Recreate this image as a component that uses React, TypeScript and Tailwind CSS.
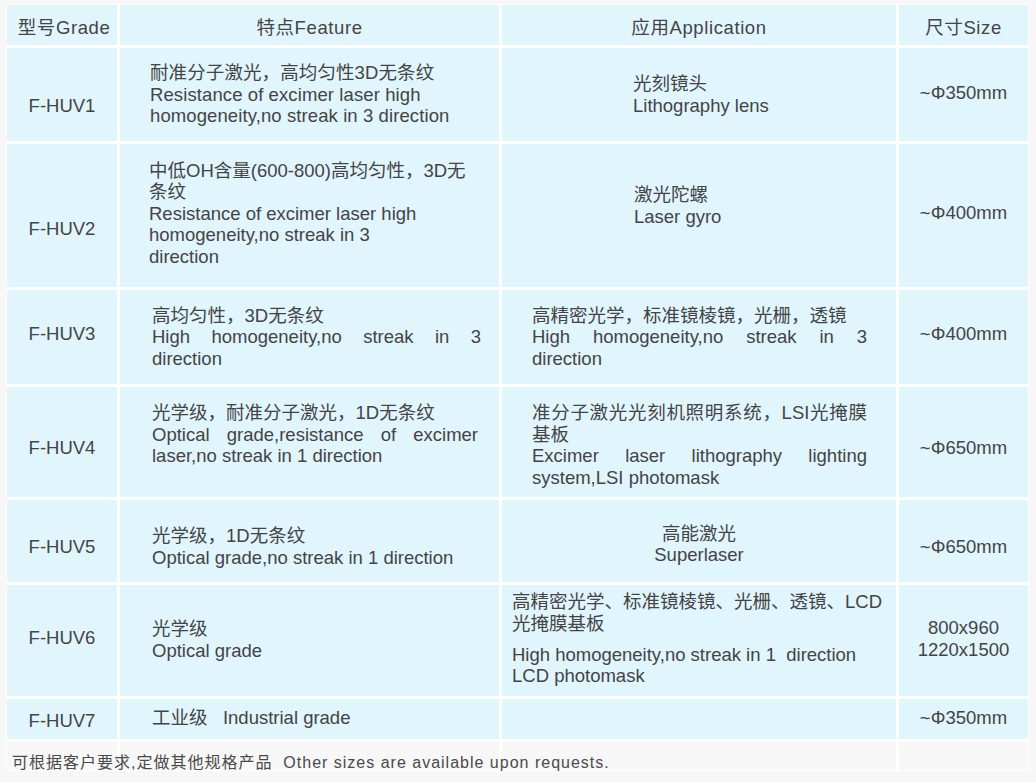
import clsx from 'clsx'

type LineProps = { text: string; justify?: boolean; className?: string }

// one rendered line of a cell
const Line = ({ text, justify, className }: LineProps) => (
  <div
    className={clsx(
      'text-[18.5px] leading-[21.5px]',
      justify ? 'text-justify [text-align-last:justify]' : 'whitespace-pre',
      className
    )}
  >
    {text}
  </div>
)

const Cell = ({ className, children }: { className?: string; children?: React.ReactNode }) => (
  <div className={clsx('flex flex-col justify-center bg-[#e1f5fd]', className)}>{children}</div>
)

const Grade = ({ text, className }: { text: string; className?: string }) => (
  <Cell className={clsx('items-center', className)}>
    <Line text={text} />
  </Cell>
)

const Size = ({ lines, className }: { lines: string[]; className?: string }) => (
  <Cell className={clsx('items-center', className)}>
    {lines.map((l) => (
      <Line key={l} text={l} />
    ))}
  </Cell>
)

export default function App() {
  return (
    <div className="min-h-screen bg-[#f7f7f7] pl-[6px] pt-[4px] font-['Liberation_Sans','Noto_Sans_CJK_SC',sans-serif] text-[#444]">
      <div className="inline-block bg-white p-px">
        <div className="grid grid-cols-[110px_379px_394px_129px] grid-rows-[40px_93px_143px_94px_110px_82px_111px_40px_28px] gap-[3px]">
          {/* header */}
          <Cell className="items-center pt-[6px] pl-[4px] tracking-[0.6px]">
            <Line text="型号Grade" />
          </Cell>
          <Cell className="items-center pt-[6px] tracking-[0.6px]">
            <Line text="特点Feature" />
          </Cell>
          <Cell className="items-center pt-[6px] tracking-[0.6px]">
            <Line text="应用Application" />
          </Cell>
          <Cell className="items-center pt-[6px] tracking-[0.6px]">
            <Line text="尺寸Size" />
          </Cell>

          {/* F-HUV1 */}
          <Grade text="F-HUV1" className="pt-[22px]" />
          <Cell className="pl-[30px] tracking-[0.1px]">
            <Line text="耐准分子激光，高均匀性3D无条纹" />
            <Line text="Resistance of excimer laser high" />
            <Line text="homogeneity,no streak in 3 direction" />
          </Cell>
          <Cell className="pl-[131px]">
            <Line text="光刻镜头" />
            <Line text="Lithography lens" />
          </Cell>
          <Size lines={['~Φ350mm']} className="pb-[3px]" />

          {/* F-HUV2 */}
          <Grade text="F-HUV2" className="pt-[27px]" />
          <Cell className="pl-[29px] pb-[4px]">
            <Line text="中低OH含量(600-800)高均匀性，3D无" />
            <Line text="条纹" />
            <Line text="Resistance of excimer laser high" />
            <Line text="homogeneity,no streak in 3" />
            <Line text="direction" />
          </Cell>
          <Cell className="pl-[132px] pb-[20px]">
            <Line text="激光陀螺" />
            <Line text="Laser gyro" />
          </Cell>
          <Size lines={['~Φ400mm']} className="pb-[6px]" />

          {/* F-HUV3 */}
          <Grade text="F-HUV3" className="pb-[6px]" />
          <Cell className="pl-[32px] pr-[18px]">
            <Line text="高均匀性，3D无条纹" />
            <Line justify text="High homogeneity,no streak in 3" />
            <Line text="direction" />
          </Cell>
          <Cell className="pl-[30px] pr-[29px]">
            <Line text="高精密光学，标准镜棱镜，光栅，透镜" />
            <Line justify text="High homogeneity,no streak in 3" />
            <Line text="direction" />
          </Cell>
          <Size lines={['~Φ400mm']} className="pb-[6px]" />

          {/* F-HUV4 */}
          <Grade text="F-HUV4" className="pt-[11px]" />
          <Cell className="pl-[32px] pr-[21px] pt-[6px]">
            <Line text="光学级，耐准分子激光，1D无条纹" />
            <Line justify text="Optical grade,resistance of excimer" />
            <Line text="laser,no streak in 1 direction" />
            <Line text=" " />
          </Cell>
          <Cell className="pl-[30px] pr-[29px] pt-[6px]">
            <Line justify text="准分子激光光刻机照明系统，LSI光掩膜" />
            <Line text="基板" />
            <Line justify text="Excimer laser lithography lighting" />
            <Line text="system,LSI photomask" />
          </Cell>
          <Size lines={['~Φ650mm']} className="pt-[11px]" />

          {/* F-HUV5 */}
          <Grade text="F-HUV5" className="pt-[11px]" />
          <Cell className="pl-[32px] pt-[11px]">
            <Line text="光学级，1D无条纹" />
            <Line text="Optical grade,no streak in 1 direction" />
          </Cell>
          <Cell className="items-center pt-[6px]">
            <Line text="高能激光" />
            <Line text="Superlaser" />
          </Cell>
          <Size lines={['~Φ650mm']} className="pt-[12px]" />

          {/* F-HUV6 */}
          <Grade text="F-HUV6" className="pb-[5px]" />
          <Cell className="pl-[32px] pb-[2px]">
            <Line text="光学级" />
            <Line text="Optical grade" />
          </Cell>
          <Cell className="pl-[10px] pr-[8px] pb-[3px]">
            <Line text="高精密光学、标准镜棱镜、光栅、透镜、LCD" />
            <Line text="光掩膜基板" />
            <Line text="High homogeneity,no streak in 1  direction" className="mt-[9.5px]" />
            <Line text="LCD photomask" />
          </Cell>
          <Size lines={['800x960', '1220x1500']} className="pb-[4px]" />

          {/* F-HUV7 */}
          <Grade text="F-HUV7" className="pt-[3px]" />
          <Cell className="pl-[32px] pb-[3px]">
            <Line text={'工业级\u00a0\u00a0\u00a0Industrial grade'} />
          </Cell>
          <Cell />
          <Size lines={['~Φ350mm']} className="pb-[3px]" />

          {/* note row */}
          <div className="bg-[#f7f7f7]">
            <div className="relative z-10 whitespace-pre pl-[5px] pt-[11px] text-[16px] leading-[20px] tracking-[1px] text-[#4a4a4a]">
              {'可根据客户要求,定做其他规格产品  Other sizes are available upon requests.'}
            </div>
          </div>
          <div className="bg-[#f7f7f7]" />
          <div className="bg-[#f7f7f7]" />
          <div className="bg-[#f7f7f7]" />
        </div>
      </div>
    </div>
  )
}
